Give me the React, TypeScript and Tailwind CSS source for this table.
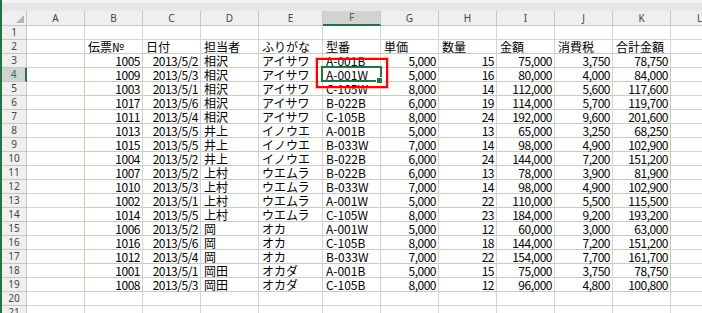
import React from 'react';

// 伝票データ (B3:K19)
const data: string[][] = [
  ['1005', '2013/5/2', '相沢', 'アイサワ', 'A-001B', '5,000', '15', '75,000', '3,750', '78,750'],
  ['1009', '2013/5/3', '相沢', 'アイサワ', 'A-001W', '5,000', '16', '80,000', '4,000', '84,000'],
  ['1003', '2013/5/1', '相沢', 'アイサワ', 'C-105W', '8,000', '14', '112,000', '5,600', '117,600'],
  ['1017', '2013/5/6', '相沢', 'アイサワ', 'B-022B', '6,000', '19', '114,000', '5,700', '119,700'],
  ['1011', '2013/5/4', '相沢', 'アイサワ', 'C-105B', '8,000', '24', '192,000', '9,600', '201,600'],
  ['1013', '2013/5/5', '井上', 'イノウエ', 'A-001B', '5,000', '13', '65,000', '3,250', '68,250'],
  ['1015', '2013/5/5', '井上', 'イノウエ', 'B-033W', '7,000', '14', '98,000', '4,900', '102,900'],
  ['1004', '2013/5/2', '井上', 'イノウエ', 'B-022B', '6,000', '24', '144,000', '7,200', '151,200'],
  ['1007', '2013/5/2', '上村', 'ウエムラ', 'B-022B', '6,000', '13', '78,000', '3,900', '81,900'],
  ['1010', '2013/5/3', '上村', 'ウエムラ', 'B-033W', '7,000', '14', '98,000', '4,900', '102,900'],
  ['1002', '2013/5/1', '上村', 'ウエムラ', 'A-001W', '5,000', '22', '110,000', '5,500', '115,500'],
  ['1014', '2013/5/5', '上村', 'ウエムラ', 'C-105W', '8,000', '23', '184,000', '9,200', '193,200'],
  ['1006', '2013/5/2', '岡', 'オカ', 'A-001W', '5,000', '12', '60,000', '3,000', '63,000'],
  ['1016', '2013/5/6', '岡', 'オカ', 'C-105B', '8,000', '18', '144,000', '7,200', '151,200'],
  ['1012', '2013/5/4', '岡', 'オカ', 'B-033W', '7,000', '22', '154,000', '7,700', '161,700'],
  ['1001', '2013/5/1', '岡田', 'オカダ', 'A-001B', '5,000', '15', '75,000', '3,750', '78,750'],
  ['1008', '2013/5/3', '岡田', 'オカダ', 'C-105B', '8,000', '12', '96,000', '4,800', '100,800'],
];

const headings = ['伝票№', '日付', '担当者', 'ふりがな', '型番', '単価', '数量', '金額', '消費税', '合計金額'];

const letters = ['A', 'B', 'C', 'D', 'E', 'F', 'G', 'H', 'I', 'J', 'K', 'L'];
const widths = [
  'w-[58px]', 'w-[58px]', 'w-[58px]', 'w-[58px]', 'w-[64px]', 'w-[58px]',
  'w-[58px]', 'w-[58px]', 'w-[58px]', 'w-[58px]', 'w-[58px]', 'w-[58px]',
];
// columns B,C and G..K hold numbers -> right aligned
const rightAligned = [false, true, true, false, false, false, true, true, true, true, true, false];

function cellText(row: number, col: number): string {
  if (col < 1 || col > 10) return '';
  if (row === 2) return headings[col - 1];
  if (row >= 3 && row <= 19) return data[row - 3][col - 1];
  return '';
}

function Cell({ row, col }: { row: number; col: number }) {
  const text = cellText(row, col);
  const inTable = col >= 1 && col <= 10;
  const greenBottom = inTable && row >= 2 && row <= 19;
  const greenRight = (col === 0 || col === 10) && row >= 3 && row <= 19;
  const right = row >= 3 && rightAligned[col];

  return (
    <div
      className={`${widths[col]} shrink-0 h-full box-border border-r border-b whitespace-nowrap text-[12px] leading-[13px] text-black ${
        greenBottom ? 'border-b-[#c4d79b]' : 'border-b-[#d4d4d4]'
      } ${greenRight ? 'border-r-[#c4d79b]' : 'border-r-[#d4d4d4]'} ${
        right ? 'text-right pr-[2px] tracking-[-0.5px]' : 'text-left pl-[3px]'
      }`}
    >
      {text}
    </div>
  );
}

export default function App() {
  const rowNums = Array.from({ length: 21 }, (_, i) => i + 1);

  return (
    <div className="w-[702px] h-[313px] overflow-hidden bg-white flex font-['Noto_Sans_CJK_JP',sans-serif]">
      {/* window edge */}
      <div className="w-[2px] shrink-0 bg-[#217346]" />

      <div className="relative flex-1 flex flex-col overflow-hidden">
        {/* formula bar bottom edge */}
        <div className="h-[11px] shrink-0 bg-[#e6e6e6] border-t-[3px] border-t-[#f3f3f3]" />

        {/* column headers */}
        <div className="flex h-[15px] shrink-0 font-['Noto_Sans',sans-serif] text-[10px] text-[#444]">
          <div className="relative w-[25px] shrink-0 box-border bg-[#efefef] border-r border-b border-[#c6c6c6]">
            <div className="absolute right-[2px] bottom-[2px] w-0 h-0 border-l-[8px] border-l-transparent border-b-[8px] border-b-[#b4b4b4]" />
          </div>
          {letters.map((l, i) =>
            l === 'F' ? (
              <div
                key={l}
                className={`${widths[i]} shrink-0 box-border flex items-center justify-center bg-[#d2d2d2] text-[#217346] border-r border-r-[#c6c6c6] border-b-2 border-b-[#217346]`}
              >
                {l}
              </div>
            ) : (
              <div
                key={l}
                className={`${widths[i]} shrink-0 box-border flex items-center justify-center bg-[#efefef] border-r border-b border-[#c6c6c6]`}
              >
                {l}
              </div>
            )
          )}
        </div>

        {/* grid rows */}
        {rowNums.map((r) => (
          <div key={r} className="flex h-[14px] shrink-0">
            {r === 4 ? (
              <div className="w-[25px] shrink-0 box-border flex items-center justify-center bg-[#d2d2d2] text-[#217346] border-b border-b-[#c6c6c6] border-r-2 border-r-[#217346] font-['Noto_Sans',sans-serif] text-[10px]">
                {r}
              </div>
            ) : (
              <div className="w-[25px] shrink-0 box-border flex items-center justify-center bg-[#efefef] text-[#444] border-r border-b border-[#c6c6c6] font-['Noto_Sans',sans-serif] text-[10px]">
                {r}
              </div>
            )}
            {letters.map((_, c) => (
              <Cell key={c} row={r} col={c} />
            ))}
          </div>
        ))}

        {/* active cell F4 */}
        <div className="absolute left-[319px] top-[66px] w-[61px] h-[16px] border-2 border-[#217346] pointer-events-none" />
        <div className="absolute left-[374px] top-[77px] w-[7px] h-[7px] bg-[#217346] border border-white" />

        {/* red callout frame */}
        <div className="absolute left-[314px] top-[58px] w-[72px] h-[30px] border-2 border-[#ff0000] shadow-[0_0_1px_1px_rgba(255,120,120,0.5)] pointer-events-none" />
      </div>
    </div>
  );
}
